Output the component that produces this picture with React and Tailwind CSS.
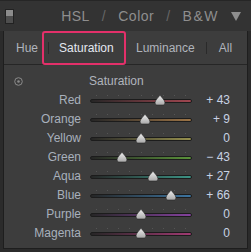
import React from "react";

const rows = [
  { name: "Red", value: 43, color: "#a04650" },
  { name: "Orange", value: 9, color: "#9c7446" },
  { name: "Yellow", value: 0, color: "#96904e" },
  { name: "Green", value: -43, color: "#5a923a" },
  { name: "Aqua", value: 27, color: "#3c9284" },
  { name: "Blue", value: 66, color: "#3c74a0" },
  { name: "Purple", value: 0, color: "#84429e" },
  { name: "Magenta", value: 0, color: "#a03a72" },
];

const formatValue = (v) => {
  if (v > 0) return `+ ${v}`;
  if (v < 0) return `\u2212 ${Math.abs(v)}`;
  return "0";
};

const Slider = ({ value, color }) => {
  // thumb travel is about 45px each way from the centre
  const left = 51 + value * 0.45;
  return (
    <div className="relative w-[102px] h-[12px]">
      {/* tick dots */}
      <div className="absolute left-[6px] right-[6px] top-[1px] flex justify-between">
        {Array.from({ length: 9 }).map((_, i) => (
          <span key={i} className="w-[1px] h-[1px] bg-[#555555]" />
        ))}
      </div>
      <div
        className="absolute left-0 right-0 top-[5px] h-[4px] rounded-full border border-[#1c1c1c]"
        style={{ background: `linear-gradient(to right, #262626, ${color})` }}
      />
      <svg
        className="absolute top-[0px]"
        style={{ left: left - 6 }}
        width="12"
        height="12"
        viewBox="0 0 12 12"
      >
        <defs>
          <linearGradient id="thumb" x1="0" y1="0" x2="0" y2="1">
            <stop offset="0" stopColor="#f0f0f0" />
            <stop offset="1" stopColor="#a8a8a8" />
          </linearGradient>
        </defs>
        <path d="M6 1 C7 3 11 6 11 9 L10 11 L2 11 L1 9 C1 6 5 3 6 1 Z" fill="url(#thumb)" stroke="#2a2a2a" strokeWidth="0.6" />
      </svg>
    </div>
  );
};

const App = () => {
  return (
    <div
      className="w-[251px] h-[252px] bg-[#2b2b2b] flex flex-col overflow-hidden"
      style={{ fontFamily: '"Liberation Sans", Arial, sans-serif' }}
    >
      {/* header */}
      <div className="h-[31px] bg-[#333333] border-t border-[#262626] flex items-center pl-[5px] pr-[10px]">
        <div className="w-[9px] h-[15px] flex flex-col border border-[#222]">
          <div className="flex-1 bg-[#8c8c8c]" />
          <div className="flex-1 bg-[#4e4e4e]" />
        </div>
        <div className="flex-1 flex items-center justify-end gap-[12px] text-[14px] tracking-[0.5px] text-[#8e8e8e] pr-[12px]">
          <span>HSL</span>
          <span className="text-[#666666]">/</span>
          <span>Color</span>
          <span className="text-[#666666]">/</span>
          <span className="tracking-[1.5px]">B&amp;W</span>
        </div>
        <svg width="10" height="9" viewBox="0 0 10 9">
          <path d="M0 0 L10 0 L5 9 Z" fill="#8e8e8e" />
        </svg>
      </div>

      {/* panel */}
      <div className="flex-1 mx-[3px] mb-[3px] border-l border-r border-b border-[#1e1e1e] bg-[#3d3d3d] flex flex-col">
        {/* tabs */}
        <div className="h-[34px] border-b border-[#262626] flex items-center text-[12px] text-[#b0b4bc]">
          <span className="ml-[12px]">Hue</span>
          <div className="ml-[4px] h-[34px] w-[84px] border-2 border-[#e3306a] rounded-[3px] flex items-center">
            <span className="w-[1px] h-[12px] bg-[#2a2a2a] ml-[4px]" />
            <span className="ml-[10px] text-[#e4e8f0]">Saturation</span>
          </div>
          <span className="ml-[10px]">Luminance</span>
          <span className="w-[1px] h-[12px] bg-[#2a2a2a] ml-[11px]" />
          <span className="ml-[12px]">All</span>
        </div>

        {/* content */}
        <div className="flex flex-col pt-[9px]">
          <div className="flex items-center h-[14px] text-[12px] text-[#b0b4bc]">
            <svg className="ml-[10px]" width="9" height="9" viewBox="0 0 9 9">
              <circle cx="4.5" cy="4.5" r="3.8" fill="none" stroke="#8a8a8a" strokeWidth="1" />
              <circle cx="4.5" cy="4.5" r="1.3" fill="#8a8a8a" />
            </svg>
            <span className="ml-[66px]">Saturation</span>
          </div>
          <div className="flex flex-col mt-[2px]">
            {rows.map((row) => (
              <div key={row.name} className="flex items-center h-[19px] text-[12px]">
                <span className="w-[77px] text-right text-[#a8b0bc]">{row.name}</span>
                <span className="ml-[9px]">
                  <Slider value={row.value} color={row.color} />
                </span>
                <span className="w-[38px] text-right text-[#c8d2e4]">{formatValue(row.value)}</span>
              </div>
            ))}
          </div>
        </div>
      </div>
    </div>
  );
};

export default App;
